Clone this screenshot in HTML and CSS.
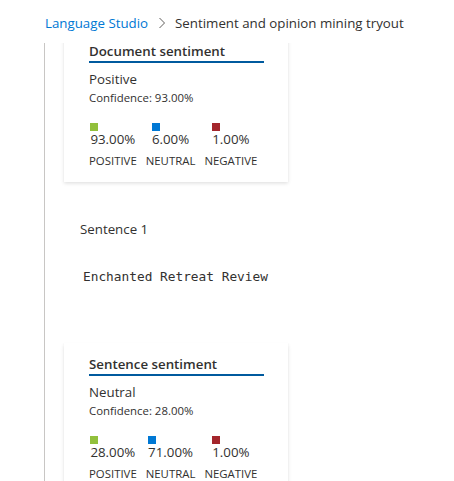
FILE: index.html
```
<!DOCTYPE html>
<html lang="en">
<head>
<meta charset="utf-8">
<title>Sentiment and opinion mining tryout</title>
<link rel="stylesheet" href="styles.css">
</head>
<body>
<nav class="breadcrumb">
  <a class="crumb-link" href="#">Language Studio</a>
  <span class="chev">
    <svg width="8" height="12" viewBox="0 0 8 12"><path d="M1.5 1 L6.5 6 L1.5 11" fill="none" stroke="#605e5c" stroke-width="1"/></svg>
  </span>
  <span class="crumb-current">Sentiment and opinion mining tryout</span>
</nav>
<main class="panel">
  <div class="content">
    <section class="card first">
      <h2 class="card-title">Document sentiment</h2>
      <div class="verdict">Positive</div>
      <div class="confidence">Confidence: 93.00%</div>
      <div class="scores">
        <div class="score"><div class="val"><span class="sq green"></span><span class="num">93.00%</span></div><span class="lbl">POSITIVE</span></div>
        <div class="score"><div class="val"><span class="sq blue"></span><span class="num">6.00%</span></div><span class="lbl">NEUTRAL</span></div>
        <div class="score"><div class="val"><span class="sq red"></span><span class="num">1.00%</span></div><span class="lbl">NEGATIVE</span></div>
      </div>
    </section>

    <div class="sentence">
      <div class="sentence-label">Sentence 1</div>
      <pre class="sentence-text">Enchanted Retreat Review</pre>
    </div>

    <section class="card second">
      <h2 class="card-title">Sentence sentiment</h2>
      <div class="verdict">Neutral</div>
      <div class="confidence">Confidence: 28.00%</div>
      <div class="scores">
        <div class="score"><div class="val"><span class="sq green"></span><span class="num">28.00%</span></div><span class="lbl">POSITIVE</span></div>
        <div class="score"><div class="val"><span class="sq blue"></span><span class="num">71.00%</span></div><span class="lbl">NEUTRAL</span></div>
        <div class="score"><div class="val"><span class="sq red"></span><span class="num">1.00%</span></div><span class="lbl">NEGATIVE</span></div>
      </div>
    </section>
  </div>
</main>
</body>
</html>
```
FILE: styles.css
```
html, body {
  margin: 0;
  padding: 0;
  background: #ffffff;
  height: 100%;
  overflow: hidden;
}
body {
  font-family: "Segoe UI", "Open Sans", "Liberation Sans", sans-serif;
  color: #323130;
  font-size: 13.3px;
}
.breadcrumb {
  height: 43px;
  display: flex;
  align-items: center;
  padding-left: 45px;
  padding-top: 3px;
  box-sizing: border-box;
  line-height: 20px;
  font-size: 13.3px;
}
.crumb-link {
  color: #0078d4;
  text-decoration: none;
}
.chev {
  display: inline-flex;
  align-items: center;
  margin: 0 9px 0 10px;
}
.crumb-current {
  color: #323130;
}
.panel {
  margin-left: 44px;
  border-left: 1px solid #c8c6c4;
  height: calc(100% - 43px);
  overflow: hidden;
}
.content {
  padding-left: 19px;
  margin-top: -13px;
}
.card {
  width: 224px;
  box-sizing: border-box;
  padding: 13px 24px 13px 25px;
  background: #fff;
  box-shadow: 0 1.6px 3.6px rgba(0,0,0,0.13), 0 0.3px 0.9px rgba(0,0,0,0.11);
}
.card-title {
  margin: 0;
  font-size: 13.3px;
  font-weight: 600;
  line-height: 16px;
  padding-bottom: 2px;
  border-bottom: 2px solid #005a9e;
}
.verdict {
  margin-top: 6px;
  line-height: 20px;
  font-size: 13.3px;
}
.confidence {
  margin-top: 1px;
  font-size: 11.4px;
  line-height: 16px;
}
.scores {
  display: flex;
  gap: 9px;
  margin-top: 17px;
}
.score {
  display: flex;
  flex-direction: column;
  align-items: center;
}
.val {
  display: flex;
  flex-direction: column;
  align-items: flex-start;
}
.sq {
  width: 8px;
  height: 8px;
  display: block;
}
.green { background: #92c03c; }
.blue { background: #0078d4; }
.red { background: #a4262c; }
.num {
  font-size: 13.3px;
  line-height: 17px;
}
.lbl {
  margin-top: 5px;
  font-size: 11.4px;
  line-height: 16px;
}
.sentence {
  margin-top: 37px;
  padding-left: 16px;
}
.sentence-label {
  line-height: 20px;
  font-size: 13.3px;
}
.sentence-text {
  margin: 29px 0 0 3px;
  font-family: "DejaVu Sans Mono", "Liberation Mono", monospace;
  font-size: 12.8px;
  line-height: 18px;
  color: #323130;
}
.card.second {
  margin-top: 57px;
}
```
